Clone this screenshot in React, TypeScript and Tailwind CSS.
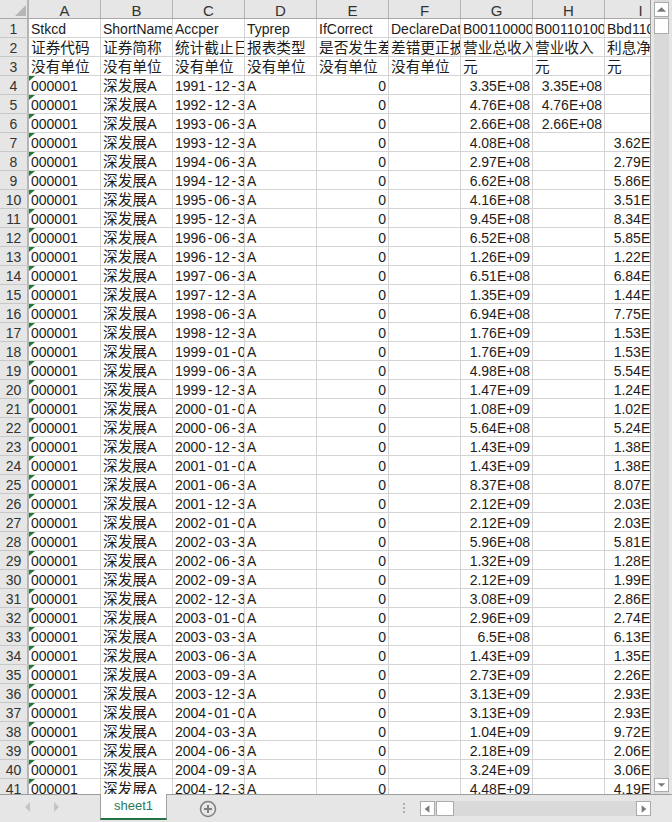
const dates = [
  "1991-12-3", "1992-12-3", "1993-06-3", "1993-12-3", "1994-06-3", "1994-12-3", "1995-06-3", "1995-12-3",
  "1996-06-3", "1996-12-3", "1997-06-3", "1997-12-3", "1998-06-3", "1998-12-3", "1999-01-0", "1999-06-3",
  "1999-12-3", "2000-01-0", "2000-06-3", "2000-12-3", "2001-01-0", "2001-06-3", "2001-12-3", "2002-01-0",
  "2002-03-3", "2002-06-3", "2002-09-3", "2002-12-3", "2003-01-0", "2003-03-3", "2003-06-3", "2003-09-3",
  "2003-12-3", "2004-01-0", "2004-03-3", "2004-06-3", "2004-09-3", "2004-12-3",
];

const totalRevenue = [
  "3.35E+08", "4.76E+08", "2.66E+08", "4.08E+08", "2.97E+08", "6.62E+08", "4.16E+08", "9.45E+08",
  "6.52E+08", "1.26E+09", "6.51E+08", "1.35E+09", "6.94E+08", "1.76E+09", "1.76E+09", "4.98E+08",
  "1.47E+09", "1.08E+09", "5.64E+08", "1.43E+09", "1.43E+09", "8.37E+08", "2.12E+09", "2.12E+09",
  "5.96E+08", "1.32E+09", "2.12E+09", "3.08E+09", "2.96E+09", "6.5E+08", "1.43E+09", "2.73E+09",
  "3.13E+09", "3.13E+09", "1.04E+09", "2.18E+09", "3.24E+09", "4.48E+09",
];

const interest = [
  "", "", "", "3.62E+08", "2.79E+08", "5.86E+08", "3.51E+08", "8.34E+08",
  "5.85E+08", "1.22E+09", "6.84E+08", "1.44E+09", "7.75E+08", "1.53E+09", "1.53E+09", "5.54E+08",
  "1.24E+09", "1.02E+09", "5.24E+08", "1.38E+09", "1.38E+09", "8.07E+08", "2.03E+09", "2.03E+09",
  "5.81E+08", "1.28E+09", "1.99E+09", "2.86E+09", "2.74E+09", "6.13E+08", "1.35E+09", "2.26E+09",
  "2.93E+09", "2.93E+09", "9.72E+08", "2.06E+09", "3.06E+09", "4.19E+09",
];

const columns = ["A", "B", "C", "D", "E", "F", "G", "H", "I"];

const headerRows = [
  { cjk: false, cells: ["Stkcd", "ShortName", "Accper", "Typrep", "IfCorrect", "DeclareDate", "B001100000", "B001101000", "Bbd1102000"] },
  { cjk: true, cells: ["证券代码", "证券简称", "统计截止日", "报表类型", "是否发生差", "差错更正披", "营业总收入", "营业收入", "利息净收入"] },
  { cjk: true, cells: ["没有单位", "没有单位", "没有单位", "没有单位", "没有单位", "没有单位", "元", "元", "元"] },
];

const RowHead = ({ children }: { children: React.ReactNode }) => (
  <div className="w-[29px] shrink-0 border-r-2 border-b border-r-[#b4b4b4] border-b-[#c8c8c8] bg-[#e6e6e6] text-center text-[14px] leading-[21px] text-[#333]">
    {children}
  </div>
);

const Cell = ({
  text = "",
  right,
  cjk,
  flag,
}: {
  text?: string;
  right?: boolean;
  cjk?: boolean;
  flag?: boolean;
}) => (
  <div
    className={`relative w-[72px] shrink-0 overflow-hidden whitespace-nowrap border-r border-b border-[#d4d4d4] leading-[21px] text-[#1c1c1c] ${
      right ? "pr-[2px] text-right" : "pl-[2px]"
    } ${cjk ? "text-[14.67px]" : "text-[14px]"}`}
  >
    {flag && (
      <span className="absolute left-0 top-0 h-0 w-0 border-t-[5px] border-r-[6px] border-t-[#1e7b34] border-r-transparent" />
    )}
    {text}
  </div>
);

const DateCell = ({ text }: { text: string }) => {
  const [y, m, d] = text.split("-");
  return (
    <div className="w-[72px] shrink-0 overflow-hidden whitespace-nowrap border-r border-b border-[#d4d4d4] pl-[2px] text-[14px] leading-[21px] text-[#1c1c1c]">
      {y}
      <span className="px-[1.7px]">-</span>
      {m}
      <span className="px-[1.7px]">-</span>
      {d}
    </div>
  );
};

const ScrollBtn = ({ dir }: { dir: "up" | "down" | "left" | "right" }) => {
  const points = {
    up: "2,9 7,4 12,9",
    down: "3,5 7,9 11,5",
    left: "9,3 4,7 9,11",
    right: "5,3 10,7 5,11",
  }[dir];
  return (
    <svg width="14" height="14" viewBox="0 0 14 14">
      <polygon points={points} fill="#7a7a7a" />
    </svg>
  );
};

export default function App() {
  return (
    <div className="flex h-[822px] w-[672px] flex-col overflow-hidden bg-[#e6e6e6] font-['Liberation_Sans','Noto_Sans_CJK_SC',sans-serif]">
      <div className="flex h-[795px] shrink-0 border-b border-[#9c9c9c]">
        <div className="w-[651px] shrink-0 overflow-hidden border-r border-[#9c9c9c] bg-white">
          <div className="flex h-[19px] border-b border-[#a8a8a8] bg-[#e6e6e6]">
            <div className="relative w-[29px] shrink-0 border-r-2 border-[#b4b4b4]">
              <svg className="absolute left-[15px] top-[5px]" width="11" height="11" viewBox="0 0 11 11">
                <polygon points="11,0 11,11 0,11" fill="#b5b5b5" />
              </svg>
            </div>
            {columns.map((c) => (
              <div
                key={c}
                className="w-[72px] shrink-0 border-r border-[#b4b4b4] text-center text-[15px] leading-[22px] text-[#333]"
              >
                {c}
              </div>
            ))}
          </div>

          {headerRows.map((row, i) => (
            <div key={i} className="flex h-[19px]">
              <RowHead>{i + 1}</RowHead>
              {row.cells.map((t, j) => (
                <Cell key={j} text={t} cjk={row.cjk} />
              ))}
            </div>
          ))}

          {dates.map((d, i) => (
            <div key={i} className="flex h-[19px]">
              <RowHead>{i + 4}</RowHead>
              <Cell text="000001" flag />
              <Cell text="深发展A" cjk />
              <DateCell text={d} />
              <Cell text="A" />
              <Cell text="0" right />
              <Cell />
              <Cell text={totalRevenue[i]} right />
              <Cell text={i < 3 ? totalRevenue[i] : ""} right />
              <Cell text={interest[i]} right />
            </div>
          ))}
        </div>

        {/* vertical scrollbar */}
        <div className="ml-[3px] flex w-[15px] shrink-0 flex-col bg-[#d9d9d9] py-[2px]">
          <div className="flex h-[15px] items-center justify-center border border-[#ababab] bg-white">
            <ScrollBtn dir="up" />
          </div>
          <div className="mt-px h-[16px] border border-[#ababab] bg-white" />
          <div className="flex-1" />
          <div className="flex h-[14px] items-center justify-center border border-[#ababab] bg-white">
            <ScrollBtn dir="down" />
          </div>
        </div>
      </div>

      {/* tab bar */}
      <div className="flex flex-1 items-start">
        <div className="flex w-[100px] shrink-0 items-center gap-[19px] pl-[22px] pt-[5px]">
          <svg width="10" height="14" viewBox="0 0 10 14">
            <polygon points="8,2 3,7 8,12" fill="#c4c4c4" />
          </svg>
          <svg width="10" height="14" viewBox="0 0 10 14">
            <polygon points="3,2 8,7 3,12" fill="#c4c4c4" />
          </svg>
        </div>
        <div className="mt-[-1px] h-[26px] w-[67px] shrink-0 border-x border-b-2 border-x-[#a0a0a0] border-b-[#217346] bg-white text-center text-[13px] leading-[24px] text-[#2b7a5c]">
          sheet1
        </div>
        <svg className="ml-[32px] mt-[5px] shrink-0" width="18" height="18" viewBox="0 0 18 18">
          <circle cx="9" cy="9" r="7.5" fill="none" stroke="#7f7f7f" strokeWidth="1.5" />
          <path d="M9 5v8M5 9h8" stroke="#7f7f7f" strokeWidth="2" />
        </svg>
        <div className="ml-[186px] mt-[8px] flex w-[2px] shrink-0 flex-col gap-[2px]">
          <span className="h-[2px] w-[2px] bg-[#b0b0b0]" />
          <span className="h-[2px] w-[2px] bg-[#b0b0b0]" />
          <span className="h-[2px] w-[2px] bg-[#b0b0b0]" />
        </div>
        <div className="ml-[15px] mt-[6px] flex h-[15px] w-[231px] shrink-0 bg-[#d9d9d9]">
          <div className="flex w-[15px] items-center justify-center border border-[#ababab] bg-white">
            <ScrollBtn dir="left" />
          </div>
          <div className="ml-px w-[18px] border border-[#ababab] bg-white" />
          <div className="flex-1" />
          <div className="flex w-[15px] items-center justify-center border border-[#ababab] bg-white">
            <ScrollBtn dir="right" />
          </div>
        </div>
      </div>
    </div>
  );
}
